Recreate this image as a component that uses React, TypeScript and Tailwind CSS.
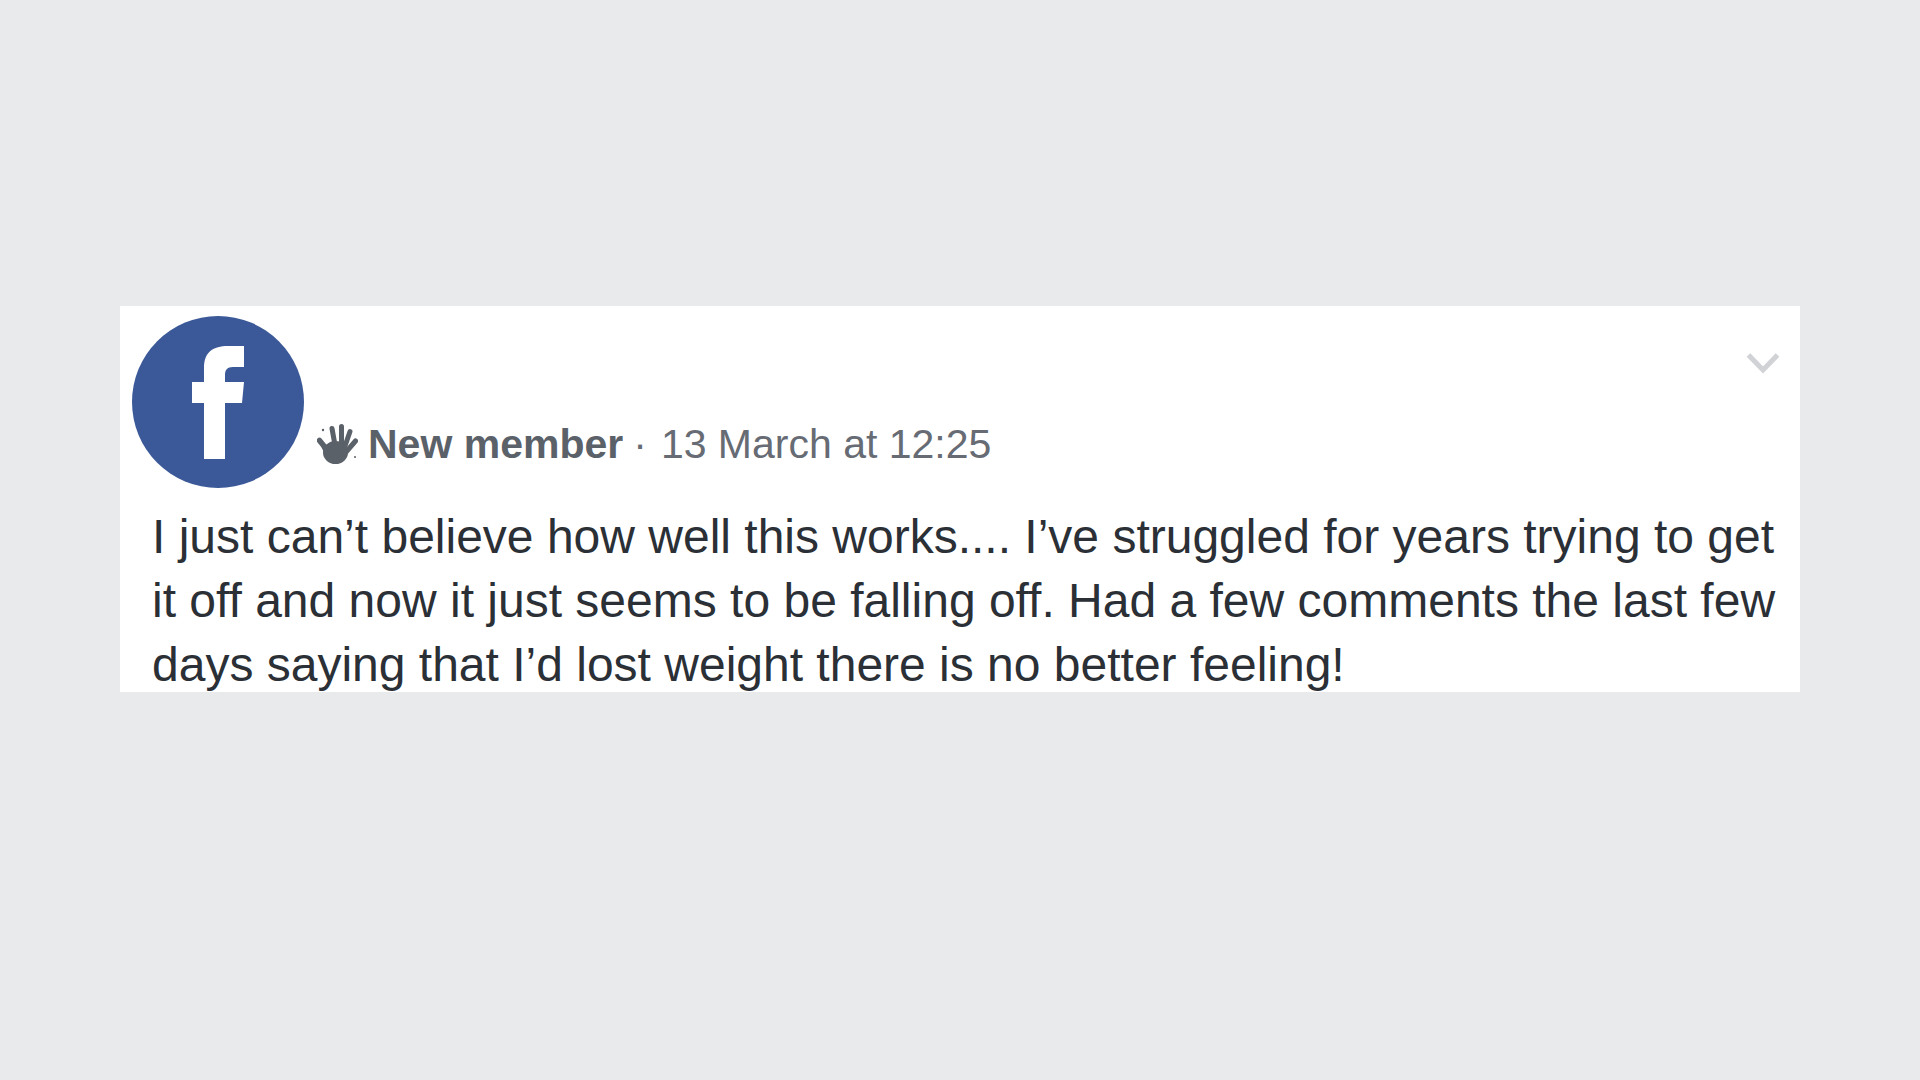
function FacebookBadge() {
  return (
    <svg viewBox="0 0 172 172" className="h-[172px] w-[172px] shrink-0">
      <circle cx="86" cy="86" r="86" fill="#3b5998" />
      <path
        d="M72 143V87H60V66H72V52C72 36 81 30 96 30H112V51H101C95 51 93 54 93 59V66H112L110 87H93V143Z"
        fill="#fff"
      />
    </svg>
  );
}

function HandIcon() {
  return (
    <svg viewBox="0 0 41 42" className="h-[42px] w-[41px] shrink-0" fill="none" stroke="#5b6169" strokeLinecap="round">
      <ellipse cx="18.500" cy="29.500" rx="12.500" ry="11.500" fill="#5b6169" stroke="none" />
      <path d="M2.500 17.500C5 20 8 24 10 29" strokeWidth="5.500" />
      <path d="M15 5.500L18 22" strokeWidth="5" />
      <path d="M24.500 3.500L24.500 22" strokeWidth="5" />
      <path d="M33 8.500L28 23" strokeWidth="5" />
      <path d="M38.500 18L29 29" strokeWidth="5" />
      <circle cx="6" cy="7" r="1.200" fill="#5b6169" stroke="none" />
      <circle cx="38" cy="34" r="1" fill="#5b6169" stroke="none" />
    </svg>
  );
}

function ChevronIcon() {
  return (
    <svg viewBox="0 0 34 22" className="h-[22px] w-[34px]" fill="none">
      <path d="M2.500 3L17 18L31.500 3" stroke="#d0d2d6" strokeWidth="5" />
    </svg>
  );
}

export default function App() {
  return (
    <main className="flex min-h-screen items-start bg-[#e9eaec] px-[120px] pt-[306px] font-['Liberation_Sans',Arial,sans-serif]">
      <article className="relative h-[386px] w-[1680px] bg-white pl-[12px] pt-[10px]">
        <div className="flex items-end">
          <FacebookBadge />
          <div className="mb-[20px] ml-[13px] flex items-center text-[41px] leading-[48px] text-[#666b74]">
            <HandIcon />
            <span className="ml-[10px] font-bold text-[#5b6169]">New member</span>
            <span className="ml-[10px]">·</span>
            <span className="ml-[14px]">13 March at 12:25</span>
          </div>
        </div>
        <p className="mt-[17px] whitespace-nowrap pl-[20px] text-[48px] leading-[64px] text-[#2b2f36]">
          I just can’t believe how well this works.... I’ve struggled for years trying to get
          <br />
          it off and now it just seems to be falling off. Had a few comments the last few
          <br />
          days saying that I’d lost weight there is no better feeling!
        </p>
        <div className="absolute right-[20px] top-[46px]">
          <ChevronIcon />
        </div>
      </article>
    </main>
  );
}
